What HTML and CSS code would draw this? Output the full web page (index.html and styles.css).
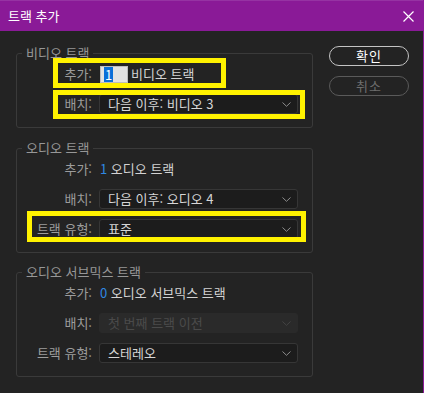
FILE: index.html
```html
<!DOCTYPE html>
<html lang="ko">
<head>
<meta charset="utf-8">
<title>트랙 추가</title>
<link rel="stylesheet" href="styles.css">
</head>
<body>
<div class="window">
  <div class="titlebar">
    <span class="title">트랙 추가</span>
    <svg class="close" width="11" height="11" viewBox="0 0 11 11"><path d="M0.5 0.5 L10.5 10.5 M10.5 0.5 L0.5 10.5" stroke="#ffffff" stroke-width="1.2" fill="none"/></svg>
  </div>
  <div class="content">
    <div class="groups">
      <fieldset class="group g1">
        <legend>비디오 트랙</legend>
        <div class="rows">
          <div class="row">
            <span class="label">추가:</span>
            <span class="spin"><span class="selected">1</span></span>
            <span class="value">비디오 트랙</span>
            <span class="mark mark-1"></span>
          </div>
          <div class="row">
            <span class="label">배치:</span>
            <div class="select"><span>다음 이후: 비디오 3</span><svg class="chev" width="9" height="5" viewBox="0 0 9 5"><polyline points="0.5,0.5 4.5,4.3 8.5,0.5" fill="none" stroke="#8c8c8c" stroke-width="1"/></svg></div>
            <span class="mark mark-2"></span>
          </div>
        </div>
      </fieldset>
      <fieldset class="group g2">
        <legend>오디오 트랙</legend>
        <div class="rows">
          <div class="row">
            <span class="label">추가:</span>
            <span class="value"><span class="num">1</span> 오디오 트랙</span>
          </div>
          <div class="row">
            <span class="label">배치:</span>
            <div class="select"><span>다음 이후: 오디오 4</span><svg class="chev" width="9" height="5" viewBox="0 0 9 5"><polyline points="0.5,0.5 4.5,4.3 8.5,0.5" fill="none" stroke="#8c8c8c" stroke-width="1"/></svg></div>
          </div>
          <div class="row">
            <span class="label">트랙 유형:</span>
            <div class="select"><span>표준</span><svg class="chev" width="9" height="5" viewBox="0 0 9 5"><polyline points="0.5,0.5 4.5,4.3 8.5,0.5" fill="none" stroke="#8c8c8c" stroke-width="1"/></svg></div>
            <span class="mark mark-3"></span>
          </div>
        </div>
      </fieldset>
      <fieldset class="group g3">
        <legend>오디오 서브믹스 트랙</legend>
        <div class="rows">
          <div class="row">
            <span class="label">추가:</span>
            <span class="value"><span class="num">0</span> 오디오 서브믹스 트랙</span>
          </div>
          <div class="row">
            <span class="label">배치:</span>
            <div class="select disabled"><span>첫 번째 트랙 이전</span><svg class="chev" width="9" height="5" viewBox="0 0 9 5"><polyline points="0.5,0.5 4.5,4.3 8.5,0.5" fill="none" stroke="#444444" stroke-width="1"/></svg></div>
          </div>
          <div class="row">
            <span class="label">트랙 유형:</span>
            <div class="select"><span>스테레오</span><svg class="chev" width="9" height="5" viewBox="0 0 9 5"><polyline points="0.5,0.5 4.5,4.3 8.5,0.5" fill="none" stroke="#8c8c8c" stroke-width="1"/></svg></div>
          </div>
        </div>
      </fieldset>
    </div>
    <div class="buttons">
      <button class="btn ok">확인</button>
      <button class="btn cancel">취소</button>
    </div>
  </div>
</div>
</body>
</html>
```
FILE: styles.css
```css
* { box-sizing: border-box; }
html, body {
  margin: 0;
  padding: 0;
  background: #232323;
}
body {
  font-family: "Noto Sans CJK KR", "Noto Sans", sans-serif;
  font-size: 13px;
  line-height: 16px;
}
.window {
  width: 424px;
  height: 393px;
  display: flex;
  flex-direction: column;
  background: #232323;
  border-right: 1px solid #8a1a97;
}
.titlebar {
  height: 31px;
  flex: none;
  background: #8a1a97;
  border-top: 1px solid #9633a3;
  display: flex;
  align-items: center;
  justify-content: space-between;
  padding: 0 9px 0 8px;
}
.title {
  color: #ffffff;
  font-size: 13px;
}
.close { display: block; }
.content {
  display: flex;
  padding: 14px 0 0 16px;
}
.groups {
  display: flex;
  flex-direction: column;
  width: 297px;
}
.group {
  margin: 0;
  padding: 3px 0 13px 0;
  border: 1px solid #3a3a3a;
  border-radius: 3px;
  min-width: 0;
}
.g2 { margin-top: 12px; }
.g3 { margin-top: 11px; }
.group legend {
  margin-left: 5px;
  padding: 0 4px;
  color: #979797;
  font-size: 13px;
  line-height: 16px;
}
.rows {
  display: flex;
  flex-direction: column;
  gap: 10px;
}
.row {
  position: relative;
  height: 20px;
  display: flex;
  align-items: center;
  gap: 7px;
}
.label {
  width: 75px;
  flex: none;
  text-align: right;
  color: #9c9c9c;
}
.value {
  color: #d2d2d2;
  margin-left: 1px;
}
.num { color: #2f88e3; }
.spin {
  width: 28px;
  height: 17px;
  margin-left: 1px;
  background: #e2e2e2;
  border: 1px solid #bdbdbd;
  display: flex;
  align-items: center;
  padding-left: 3px;
}
.spin + .value { margin-left: -4px; }
.selected {
  background: #0a6fd8;
  color: #ffffff;
  padding: 0 1px;
  line-height: 15px;
}
.select {
  width: 199px;
  height: 20px;
  background: #1c1c1c;
  border: 1px solid #363636;
  border-radius: 3px;
  display: flex;
  align-items: center;
  justify-content: space-between;
  padding: 0 6px 0 8px;
  color: #d6d6d6;
}
.select.disabled {
  background: #2a2a2a;
  border-color: #2a2a2a;
  color: #4a4a4a;
}
.chev { display: block; }
.mark {
  position: absolute;
  border: 5px solid #fff200;
  pointer-events: none;
}
.mark-1 { left: 36px; top: -6px; width: 173px; height: 30px; }
.mark-2 { left: 36px; top: -4px; width: 252px; height: 29px; }
.mark-3 { left: 10px; top: -8px; width: 279px; height: 31px; }
.buttons {
  display: flex;
  flex-direction: column;
  gap: 10px;
  margin-left: 16px;
  padding-top: 1px;
}
.btn {
  width: 80px;
  height: 20px;
  border-radius: 10px;
  background: transparent;
  font-family: "Noto Sans CJK KR", "Noto Sans", sans-serif;
  font-size: 13px;
  line-height: 16px;
  padding: 0;
  letter-spacing: 1px;
}
.ok {
  border: 1px solid #c4c4c4;
  color: #ffffff;
}
.cancel {
  border: 1px solid #5a5a5a;
  color: #6e6e6e;
}
```
